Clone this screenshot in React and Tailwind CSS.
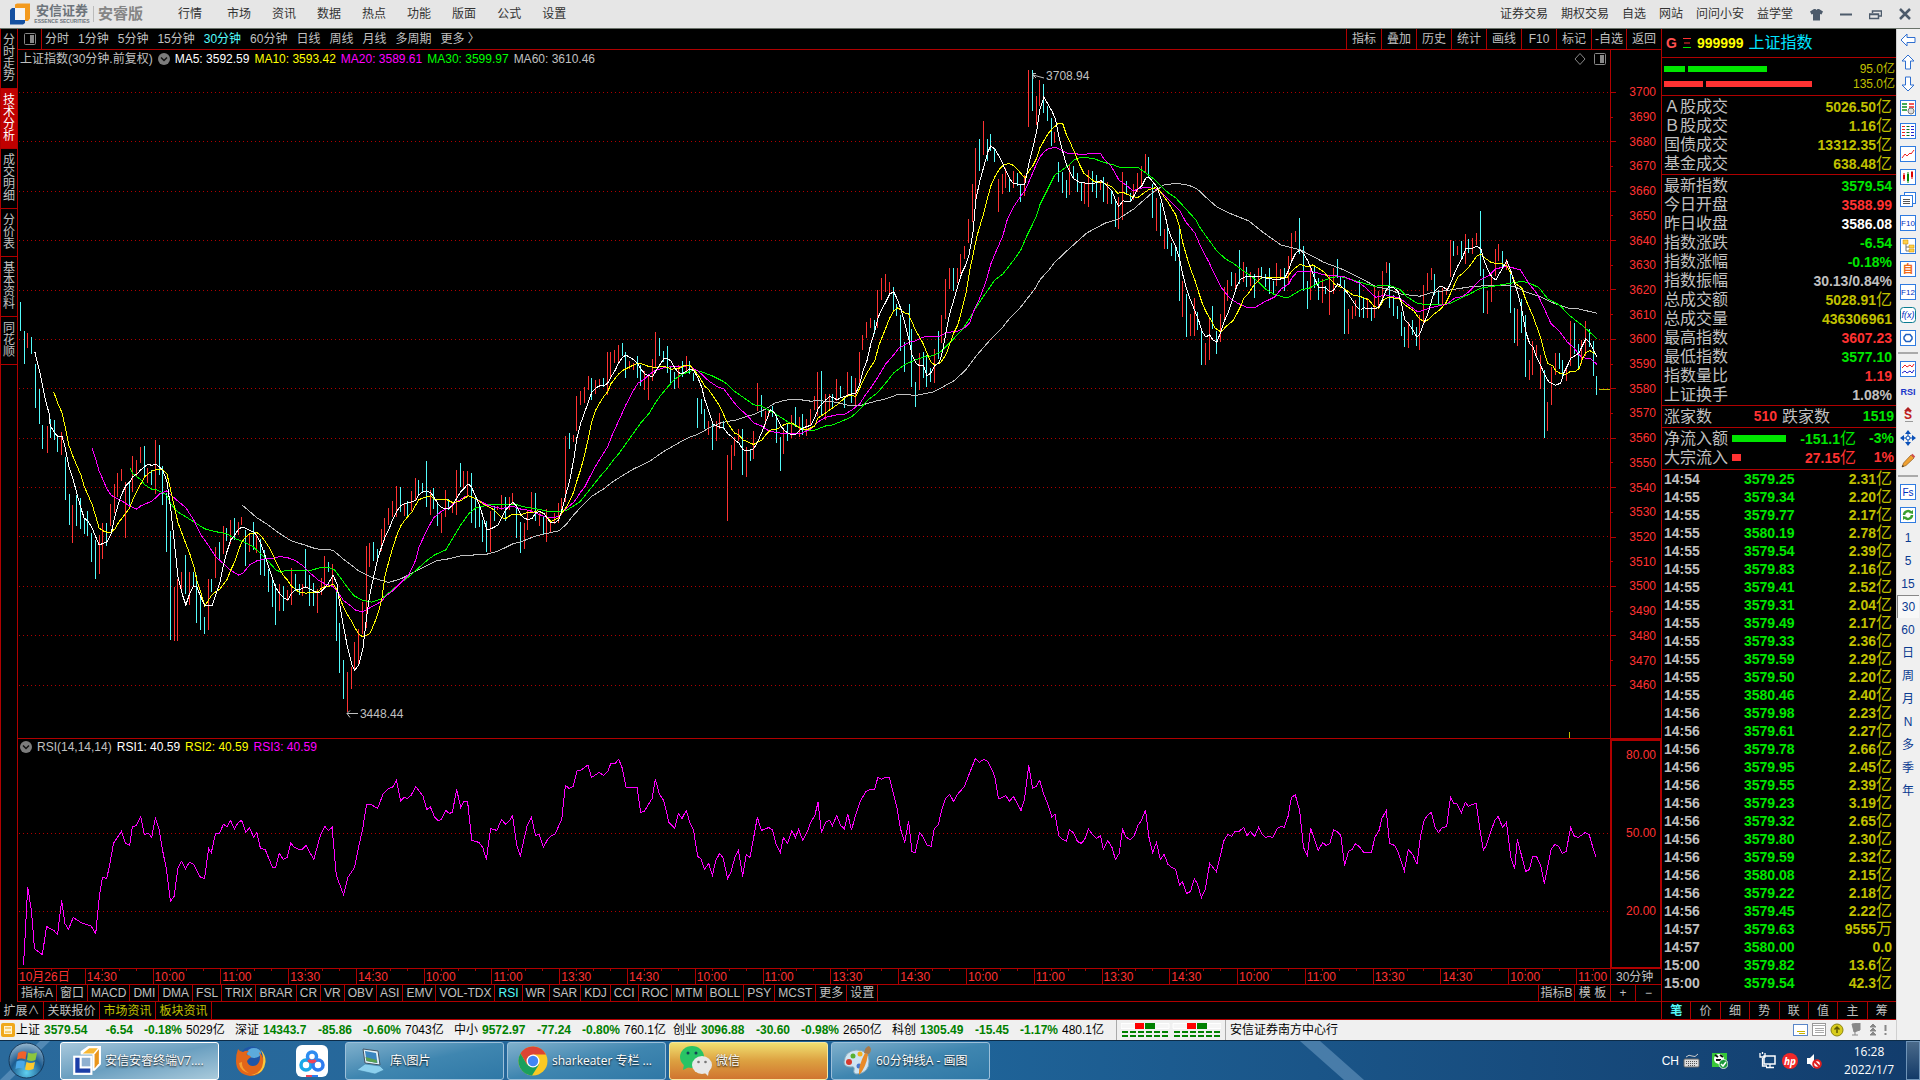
import { Fragment } from 'react'

const MENU = ['行情', '市场', '资讯', '数据', '热点', '功能', '版面', '公式', '设置']
const MENU_RIGHT = ['证券交易', '期权交易', '自选', '网站', '问问小安', '益学堂']
const SIDE_TABS = ['分时走势', '技术分析', '成交明细', '分价表', '基本资料', '同花顺']
const PERIODS = ['分时', '1分钟', '5分钟', '15分钟', '30分钟', '60分钟', '日线', '周线', '月线', '多周期', '更多 〉']
const TOOLS = ['指标', '叠加', '历史', '统计', '画线', 'F10', '标记', '-自选', '返回']
const INDICATORS = ['指标A', '窗口', 'MACD', 'DMI', 'DMA', 'FSL', 'TRIX', 'BRAR', 'CR', 'VR', 'OBV', 'ASI', 'EMV', 'VOL-TDX', 'RSI', 'WR', 'SAR', 'KDJ', 'CCI', 'ROC', 'MTM', 'BOLL', 'PSY', 'MCST', '更多', '设置']
const TIMES = ['14:30', '10:00', '11:00', '13:30']
const PRICES = Array.from({ length: 25 }, (_, i) => 3700 - i * 10)
const GRID_Y = [92, 141, 191, 240, 290, 339, 388, 438, 487, 536, 586, 635, 685]

const MA = [
  ['MA5: 3592.59', 'text-white'],
  ['MA10: 3593.42', 'text-[#ffff00]'],
  ['MA20: 3589.61', 'text-[#ff00ff]'],
  ['MA30: 3599.97', 'text-[#00ff00]'],
  ['MA60: 3610.46', 'text-[#c0c0c0]'],
]

const G = 'text-[#00e600]'
const R = 'text-[#ff3232]'
const Y = 'text-[#c0c000]'
const W = 'text-white'
const S = 'text-[#c0c0c0]'

const TURNOVER = [
  ['Ａ股成交', '5026.50', '亿', Y],
  ['Ｂ股成交', '1.16', '亿', Y],
  ['国债成交', '13312.35', '亿', Y],
  ['基金成交', '638.48', '亿', Y],
]

const QUOTE = [
  ['最新指数', '3579.54', '', G],
  ['今日开盘', '3588.99', '', R],
  ['昨日收盘', '3586.08', '', W],
  ['指数涨跌', '-6.54', '', G],
  ['指数涨幅', '-0.18%', '', G],
  ['指数振幅', '30.13/0.84%', '', S],
  ['总成交额', '5028.91', '亿', Y],
  ['总成交量', '436306961', '', Y],
  ['最高指数', '3607.23', '', R],
  ['最低指数', '3577.10', '', G],
  ['指数量比', '1.19', '', R],
  ['上证换手', '1.08%', '', S],
]

const TICKS = [
  ['14:54', '3579.25', '2.31', '亿'], ['14:55', '3579.34', '2.20', '亿'], ['14:55', '3579.77', '2.17', '亿'],
  ['14:55', '3580.19', '2.78', '亿'], ['14:55', '3579.54', '2.39', '亿'], ['14:55', '3579.83', '2.16', '亿'],
  ['14:55', '3579.41', '2.52', '亿'], ['14:55', '3579.31', '2.04', '亿'], ['14:55', '3579.49', '2.17', '亿'],
  ['14:55', '3579.33', '2.36', '亿'], ['14:55', '3579.59', '2.29', '亿'], ['14:55', '3579.50', '2.20', '亿'],
  ['14:55', '3580.46', '2.40', '亿'], ['14:56', '3579.98', '2.23', '亿'], ['14:56', '3579.61', '2.27', '亿'],
  ['14:56', '3579.78', '2.66', '亿'], ['14:56', '3579.95', '2.45', '亿'], ['14:56', '3579.55', '2.39', '亿'],
  ['14:56', '3579.23', '3.19', '亿'], ['14:56', '3579.32', '2.65', '亿'], ['14:56', '3579.80', '2.30', '亿'],
  ['14:56', '3579.59', '2.32', '亿'], ['14:56', '3580.08', '2.15', '亿'], ['14:56', '3579.22', '2.18', '亿'],
  ['14:56', '3579.45', '2.22', '亿'], ['14:57', '3579.63', '9555', '万'], ['14:57', '3580.00', '0.0', ''],
  ['15:00', '3579.82', '13.6', '亿'], ['15:00', '3579.54', '42.3', '亿'],
]

const INDEXES = [
  ['上证', '3579.54', '-6.54', '-0.18%', '5029亿'],
  ['深证', '14343.7', '-85.86', '-0.60%', '7043亿'],
  ['中小', '9572.97', '-77.24', '-0.80%', '760.1亿'],
  ['创业', '3096.88', '-30.60', '-0.98%', '2650亿'],
  ['科创', '1305.49', '-15.45', '-1.17%', '480.1亿'],
]

// Chart data, cut in four blocks. Bars are "x top bottom", lines are point lists.
const BLOCKS = [
  {
    transform: 'translate(0.5 360) scale(0.35714 0.33333)',
    down: '55 -174 -87,66 -87 12,88 -70 -18,97 12 143,108 87 192,119 195 266,139 177 234,150 180 240,161 228 276,183 290 419,192 402 495,214 405 498,225 414 507,234 474 522,245 453 528,256 519 606,267 540 657,298 489 558,362 366 447,404 258 348,424 330 375,446 255 345,455 318 435,466 399 576,477 513 840,519 585 702,541 636 675,550 645 789,561 711 810,572 771 822,592 657 696,614 548 597,634 504 543,656 474 540,687 510 618,709 486 570,729 537 645,740 570 648,751 627 696,763 657 741,771 672 795,793 678 753,825 642 693,836 672 705,855 567 681,866 645 738,877 669 738,919 606 636,942 687 843,950 789 939,961 900 1017,1045 548 603,1056 567 600,1121 381 456,1141 423 471,1171 360 405,1183 369 396,1194 303 441,1213 384 447,1225 429 498,1255 417 450,1289 309 381,1320 339 489,1331 411 504,1342 438 501,1351 480 546,1362 483 576,1384 438 483,1415 411 483,1446 432 534,1457 486 579,1499 399 483,1521 471 525',
    up: '77 -82 -35,131 198 279,172 216 285,203 435 549,276 525 642,287 491 597,309 432 498,318 372 459,329 339 411,340 327 363,351 366 534,371 288 396,382 300 350,393 261 309,413 323 369,435 240 402,488 681 843,497 657 843,508 636 693,530 636 735,583 657 810,603 561 654,625 498 582,645 480 552,667 486 525,676 471 495,698 519 576,718 522 579,782 672 753,805 690 723,814 624 735,847 672 708,889 687 759,898 654 705,908 588 684,931 612 678,972 936 1056,984 921 987,992 846 927,1003 807 915,1015 726 822,1026 558 804,1034 549 621,1068 507 573,1076 474 543,1087 444 495,1098 423 471,1110 378 471,1130 429 468,1152 393 453,1163 354 423,1205 390 465,1236 459 519,1247 390 471,1267 429 459,1278 330 465,1297 333 384,1309 333 411,1373 453 576,1393 438 450,1404 405 450,1426 411 450,1435 399 435,1468 489 567,1477 453 510,1488 396 459,1510 459 498,1530 447 546,1541 489 519,1552 459 492,1563 429 489',
    ma60: '676 435 718 474 745 492 780 520 814 543 850 555 883 567 931 571 960 598 1003 633 1045 655 1087 668 1121 657 1171 630 1220 603 1250 598 1289 588 1362 583 1393 574 1435 552 1457 546 1500 528 1563 513',
    ma30: '362 324 371 342 393 360 404 375 424 388 435 389 455 399 466 407 477 432 497 457 519 471 541 486 572 507 600 515 634 522 656 536 687 549 709 562 729 582 751 606 771 630 785 637 800 631 870 631 895 624 920 624 935 630 950 651 972 684 990 708 1015 722 1040 727 1065 718 1090 697 1121 669 1150 645 1171 624 1194 602 1216 585 1247 570 1267 534 1289 495 1311 462 1331 444 1351 439 1373 433 1440 433 1470 442 1500 447 1530 454 1563 454',
    ma20: '256 264 267 300 276 333 287 360 298 387 309 405 320 413 340 423 360 438 382 448 393 438 424 424 446 402 466 393 477 405 497 424 519 444 541 480 561 525 583 558 603 591 625 612 645 632 667 646 679 640 698 615 718 603 740 597 763 597 782 590 805 594 825 602 847 618 866 639 889 660 908 672 931 680 950 706 961 723 984 741 992 750 1013 757 1034 744 1065 726 1080 708 1098 693 1121 669 1143 645 1163 600 1171 564 1194 510 1213 474 1236 453 1256 443 1278 426 1300 411 1311 408 1331 417 1362 435 1384 442 1404 446 1435 439 1457 448 1477 451 1499 459 1521 470 1541 474 1563 470',
    ma10: '149 96 161 132 172 158 183 210 192 258 203 290 214 318 225 345 234 378 245 406 256 432 267 471 276 504 287 513 298 517 309 517 320 508 332 486 351 460 362 444 371 417 382 393 393 372 404 351 413 342 424 334 435 329 446 329 455 330 466 342 477 393 488 447 497 489 519 552 530 582 541 618 550 663 561 699 572 738 583 720 592 705 603 696 614 688 634 660 645 630 656 606 667 570 676 546 687 531 698 522 718 518 729 528 740 543 751 561 763 585 771 606 782 630 793 648 805 663 814 678 825 688 836 697 855 700 877 697 889 696 898 686 908 680 919 680 931 672 942 690 950 714 961 744 972 765 984 786 992 804 1003 822 1015 832 1034 822 1045 795 1056 765 1068 717 1076 651 1087 606 1098 564 1110 525 1121 498 1130 484 1152 456 1163 435 1171 420 1183 414 1205 408 1213 417 1225 420 1247 418 1267 429 1289 423 1300 414 1311 408 1331 417 1351 432 1373 444 1384 453 1404 474 1415 476 1426 468 1435 463 1457 466 1468 460 1488 458 1505 453 1521 462 1541 485 1552 480 1563 473',
    ma5: '96 -25 103 6 111 40 119 84 127 126 136 160 139 196 150 217 161 231 172 229 180 258 192 321 203 357 214 402 225 444 234 474 245 484 256 504 267 532 276 555 287 551 298 546 309 525 318 480 329 435 340 402 351 378 362 366 371 350 382 342 393 330 404 320 413 313 424 317 435 313 446 322 455 333 466 365 477 450 488 560 497 651 508 700 519 736 530 700 541 678 550 682 561 712 572 738 592 738 603 705 614 669 625 612 634 576 645 540 656 525 667 508 676 502 687 505 698 512 709 516 718 529 729 552 740 585 751 621 763 660 771 684 782 702 793 714 805 720 814 702 825 690 836 690 847 685 855 681 866 687 877 694 889 700 898 694 908 684 919 669 931 646 942 672 950 735 961 804 972 864 984 915 992 931 1003 915 1015 864 1026 765 1034 705 1045 650 1056 597 1068 558 1076 534 1087 510 1098 480 1110 453 1121 438 1130 432 1152 426 1163 422 1171 405 1183 396 1194 393 1205 399 1213 411 1225 432 1236 444 1247 447 1255 447 1267 435 1278 414 1289 396 1300 384 1309 372 1318 380 1331 411 1342 438 1351 471 1362 510 1373 507 1384 501 1393 496 1404 471 1415 450 1426 435 1435 428 1446 440 1457 465 1468 477 1477 478 1488 477 1499 459 1510 455 1521 460 1530 474 1541 489 1552 489 1563 480',
  },
  {
    transform: 'translate(500.5 300) scale(0.35714 0.33333)',
    down: '194 399 447,256 234 300,289 234 261,343 129 168,351 156 234,385 168 234,393 195 258,446 114 168,457 153 186,468 138 219,477 198 249,488 216 267,510 183 231,530 183 222,541 219 243,553 294 384,564 297 342,572 327 387,595 366 450,625 363 387,679 387 525,701 447 483,732 285 351,763 318 351,774 345 429,785 411 513,805 372 423,827 321 381,847 342 405,900 213 348,931 282 321,953 258 294,964 291 324,984 228 309,1048 60 102,1101 -40 33,1110 12 48,1121 45 153,1132 126 216,1144 12 120,1152 87 261,1163 246 321,1185 156 234,1194 165 261,1205 204 246,1227 93 177',
    up: '172 594 645,183 408 606,205 405 426,214 288 393,225 273 315,236 261 309,247 228 270,267 240 282,278 237 258,300 156 285,309 155 234,320 150 189,331 135 186,362 183 207,373 189 210,404 213 270,415 222 300,427 177 243,435 96 204,499 195 264,522 168 216,583 363 405,606 363 423,614 339 387,637 465 663,648 435 510,656 411 468,667 387 423,690 441 531,709 393 477,720 249 333,743 333 375,751 330 351,793 387 462,816 345 414,836 351 411,858 357 408,869 327 375,880 288 330,889 216 348,911 282 360,922 282 333,942 237 303,973 216 288,995 234 315,1006 156 249,1015 105 150,1026 66 114,1037 54 84,1057 -30 84,1068 -66 0,1079 -78 -24,1090 -54 -12,1174 159 270,1216 147 249',
    ma60: '163 693 183 675 205 645 236 610 256 589 289 567 314 546 345 525 373 507 415 486 457 455 499 429 530 412 553 403 583 385 614 370 637 364 656 362 690 349 709 344 743 327 768 310 796 301 830 298 869 304 890 302 940 307 975 317 1010 316 1050 304 1079 297 1112 284 1165 286 1210 277 1232 265',
    ma30: '163 634 183 633 205 618 222 606 236 588 256 561 278 531 300 504 314 483 331 462 351 432 373 399 393 369 415 342 432 312 446 290 466 264 486 240 508 223 541 211 564 216 595 229 628 247 656 275 690 300 709 315 730 318 755 333 774 345 805 366 827 378 855 391 880 391 911 378 931 375 964 360 984 350 1006 329 1026 303 1057 277 1079 249 1101 219 1116 207 1135 192 1160 181 1190 170 1210 168 1232 156',
    ma20: '163 650 183 627 205 607 214 594 225 576 236 561 256 519 267 498 289 459 300 441 314 402 331 363 351 315 373 270 385 250 404 237 415 225 435 211 457 204 480 200 530 198 541 207 553 213 583 243 606 260 625 267 648 300 667 324 690 346 709 369 732 379 751 393 774 398 796 402 840 401 869 388 889 366 911 352 942 345 964 343 984 330 1006 312 1020 288 1037 264 1057 231 1079 192 1101 165 1116 144 1132 135 1146 126 1160 124 1180 113 1194 109 1232 109',
    ma10: '163 653 172 639 183 624 194 603 205 576 214 543 225 507 236 462 247 411 256 363 267 330 278 309 289 290 300 276 309 252 320 237 331 222 343 211 362 201 385 189 404 195 415 200 435 203 457 199 480 208 500 205 515 197 530 196 541 210 553 225 572 259 583 270 595 288 606 306 614 319 625 345 637 372 656 400 667 405 679 420 709 434 732 420 743 405 755 391 774 388 796 373 816 369 836 384 858 390 880 378 889 354 900 347 922 330 942 315 964 294 975 287 995 289 1006 264 1026 219 1048 183 1060 135 1079 84 1090 54 1101 33 1112 24 1121 30 1132 39 1142 42 1152 66 1163 93 1174 112 1185 135 1194 159 1205 186 1216 196 1232 188',
    ma5: '163 660 172 630 183 585 194 540 205 480 214 414 225 369 236 336 247 303 256 276 267 264 278 258 292 256 300 250 309 232 320 213 331 189 343 171 351 166 362 172 373 180 385 192 393 207 404 222 415 228 427 229 435 213 446 195 457 177 466 175 477 183 488 204 499 219 510 221 522 213 530 207 541 212 553 234 564 264 572 300 583 333 595 372 614 382 625 384 637 402 648 411 656 420 667 429 679 450 690 452 701 450 709 447 720 426 732 396 743 366 755 330 765 336 774 354 785 378 796 393 808 402 825 405 836 393 847 384 869 376 880 354 889 327 900 312 911 300 922 290 931 293 942 300 953 293 964 290 975 284 995 280 1006 252 1015 213 1026 183 1037 132 1048 93 1057 54 1068 27 1079 6 1090 -18 1101 -24 1112 0 1121 27 1132 69 1144 120 1152 165 1163 189 1174 198 1185 198 1194 228 1205 219 1216 198 1227 189 1232 177',
  },
  {
    transform: 'translate(940.5 50) scale(0.33333)',
    down: '40 654 723,118 267 363,142 267 333,151 252 303,163 294 336,208 381 426,232 369 408,241 402 456,277 60 183,310 102 189,322 168 213,334 204 288,355 336 396,367 366 429,379 390 444,400 348 381,412 369 426,424 399 453,457 363 426,469 375 444,490 381 456,514 420 462,526 447 531,559 393 432,571 429 456,625 321 384,637 402 504,661 459 558,682 534 597,694 579 618,706 591 633,718 531 753,739 732 861,772 786 840,784 834 945,817 768 837,829 843 912,874 666 708,898 600 702,919 651 711,943 672 744,964 651 687,976 672 711,988 654 732,1000 693 729,1033 654 723,1078 504 612,1090 588 723,1102 693 777,1123 645 714,1135 684 750,1156 708 732,1192 627 684,1201 681 708,1213 690 852,1258 690 801',
    up: '4 795 879,16 687 807,28 654 717,52 654 700,61 612 672,73 588 627,85 507 579,97 402 516,106 294 447,130 213 315,175 387 486,187 372 432,196 354 414,220 363 414,253 375 438,265 60 231,289 138 225,298 90 168,343 246 279,388 342 435,433 399 462,445 360 471,481 393 420,502 396 462,535 441 537,547 366 510,580 402 450,592 369 426,604 348 411,616 312 369,649 444 543,673 537 597,727 693 801,751 792 858,763 744 858,796 879 945,808 801 930,841 792 876,853 711 816,862 690 753,886 669 720,910 636 696,931 666 708,955 654 696,1009 639 708,1021 657 690,1045 618 699,1054 549 630,1066 543 576,1111 651 750,1147 687 759,1168 678 795,1180 654 732,1225 777 852,1237 768 807,1246 750 798',
    ma60: '0 1015 40 993 76 960 106 919 151 868 190 828 199 815 241 771 283 717 298 690 325 660 343 637 382 600 439 549 495 519 532 508 580 477 631 432 670 405 710 400 745 406 770 417 805 450 829 471 865 489 925 513 970 549 1021 585 1080 600 1150 637 1210 660 1260 685',
    ma30: '0 906 28 879 64 840 85 810 106 774 130 738 163 690 187 672 199 657 220 630 241 600 259 558 274 528 289 495 298 465 310 441 325 411 343 375 361 363 385 345 400 330 422 322 457 325 490 337 520 345 537 352 592 352 613 367 640 387 665 412 685 430 706 444 739 480 766 510 781 537 805 570 829 603 855 627 877 639 905 660 931 678 950 693 975 717 1000 733 1030 742 1045 742 1080 721 1108 714 1140 696 1170 684 1195 679 1220 685 1260 697',
    ma20: '0 858 22 847 50 845 72 834 88 819 100 783 118 744 136 696 151 642 166 606 187 558 199 513 217 474 241 438 253 423 265 396 283 354 298 321 313 303 325 296 346 292 361 300 379 309 430 314 445 311 480 310 490 327 511 348 522 366 535 390 556 405 578 423 595 416 620 411 655 420 680 444 700 464 718 483 736 516 763 549 781 591 805 636 820 669 841 711 870 747 890 759 918 772 945 772 970 757 1003 741 1022 717 1045 702 1054 684 1070 666 1087 664 1125 667 1150 675 1210 680 1240 693 1260 701',
    ma10: '0 938 16 915 28 882 40 849 52 825 64 780 76 732 88 660 97 618 109 560 120 522 130 489 142 441 151 408 163 381 175 360 187 347 205 340 220 347 232 360 253 384 265 363 277 348 289 324 298 294 310 273 322 252 337 235 355 219 367 222 379 258 391 282 403 309 415 339 430 370 445 381 460 394 490 399 514 411 532 430 547 427 571 438 592 443 610 429 625 419 646 413 658 423 682 456 706 495 718 534 727 579 739 621 751 660 763 690 775 729 787 765 799 790 811 810 823 834 841 846 853 834 865 822 877 813 889 792 901 768 910 745 925 729 943 702 961 684 1039 684 1054 663 1078 643 1100 651 1117 645 1132 654 1150 666 1168 687 1185 705 1213 717 1237 735 1260 740',
    ma5: '0 927 7 900 16 850 28 790 40 750 52 708 64 669 76 645 85 618 97 552 106 450 118 393 130 350 142 306 151 288 163 297 175 318 187 342 196 363 208 387 217 399 241 405 253 402 265 342 277 294 289 240 298 180 310 141 322 162 334 183 345 207 355 258 367 306 379 348 391 372 400 387 418 397 457 402 481 392 490 399 502 411 514 423 526 453 535 469 547 453 571 454 580 438 592 417 604 408 616 384 625 381 637 396 649 411 661 444 673 492 682 534 694 567 706 591 718 630 727 675 739 720 751 753 763 783 775 813 784 843 796 861 808 855 817 870 829 877 841 846 853 810 865 783 877 747 889 708 901 687 913 681 943 681 955 679 976 684 1009 690 1033 684 1045 660 1054 633 1066 609 1078 600 1090 612 1102 633 1111 654 1123 687 1135 714 1156 714 1168 726 1180 720 1192 702 1201 708 1213 720 1225 735 1237 753 1249 771 1260 781',
  },
  {
    transform: 'translate(1300.5 180) scale(0.33333)',
    down: '190 351 414,214 381 423,268 249 384,280 345 408,292 378 417,304 396 468,313 441 501,337 420 465,349 441 498,403 282 345,415 330 372,460 183 228,484 183 240,505 177 219,541 93 288,550 267 399,607 213 264,631 267 399,643 384 489,664 357 459,676 405 591,733 570 774,778 519 567,787 540 594,823 429 522,835 492 564,868 447 501,880 483 588,889 588 645',
    up: '202 354 414,223 318 414,235 333 381,247 273 354,259 246 279,325 426 504,358 405 510,370 315 435,382 279 333,394 264 300,427 324 375,439 324 346,451 180 291,472 198 225,496 162 252,517 174 222,529 159 195,562 333 402,574 276 366,586 207 288,595 192 243,619 237 270,652 387 498,688 540 600,697 483 585,709 495 528,721 525 627,742 666 753,754 561 675,766 519 585,799 567 603,811 423 558,844 480 552,856 423 528',
    ma60: '180 295 229 321 259 327 304 343 358 349 390 339 430 333 520 319 610 316 640 319 676 336 720 351 750 366 800 384 835 387 889 400',
    ma30: '180 307 220 319 265 316 298 328 320 351 350 370 375 374 445 372 470 360 508 342 540 325 590 317 625 311 665 304 690 311 715 323 742 357 778 376 805 405 847 438 889 476',
    ma20: '180 311 200 327 214 342 226 352 256 345 298 355 320 372 352 396 397 382 440 372 466 352 484 351 508 333 538 300 565 287 585 267 620 259 660 270 682 306 712 345 733 390 751 430 778 456 800 486 820 504 844 534 868 535 889 553',
    ma10: '180 350 205 360 220 379 235 385 250 360 265 351 298 358 313 375 340 393 355 414 370 426 382 420 397 405 418 390 436 369 448 345 460 318 472 291 484 282 508 258 529 228 541 222 553 234 574 249 604 250 619 258 634 285 646 312 664 324 676 360 697 408 709 441 721 474 733 525 742 550 757 558 766 573 781 582 796 583 811 574 826 574 836 566 847 534 856 519 868 512 880 519 889 527',
    ma5: '180 391 190 384 223 387 235 381 247 357 256 333 265 320 280 324 292 333 304 375 313 420 325 432 337 450 349 471 358 462 370 430 382 402 394 360 403 333 418 318 430 322 440 331 451 309 460 285 472 258 484 237 496 207 517 205 529 198 541 207 550 240 562 270 574 291 586 300 598 279 610 258 619 243 631 273 643 315 652 339 664 390 676 456 688 492 697 501 709 534 721 558 733 585 745 606 757 612 766 616 781 609 790 579 802 555 811 535 835 520 844 501 856 477 868 489 880 513 889 530',
  },
]

const RSI = [
  ['translate(0 730) scale(0.52301 0.33333)', '45 705 53 471 60 540 66 656 81 673 89 589 103 601 110 613 118 511 124 580 131 597 140 562 156 578 174 587 183 610 190 498 196 442 204 445 210 402 217 340 232 304 240 340 248 346 253 291 261 286 269 260 276 313 284 310 290 322 297 265 304 297 312 370 318 415 326 514 333 498 340 415 347 394 355 416 362 396 370 402 383 441 391 445 399 355 404 368 412 310 420 309 427 283 434 289 441 271 448 297 456 276 462 271 470 307 477 292 485 322 491 307 498 355 507 358 521 412 527 412 534 370 542 388 549 382 556 339 562 350 572 358 578 358 585 346 600 388 613 313 621 289 628 301 635 292 643 436 657 494 665 442 678 412 685 355 693 300 701 223 709 223 722 235 733 190 743 175 751 171 758 151 766 214 772 202 779 205 786 196 795 169 809 199 816 238 823 231 831 261 838 272 844 268 852 241 859 250 865 247 873 178 881 232 887 214 894 214 902 331 916 337 923 352 930 388 938 295 950 301 959 268 967 283 974 272 980 256 988 346 995 376 1008 286 1016 262 1024 316 1031 313 1039 352 1046 331 1054 316 1061 313 1074 268 1081 166 1088 175 1096 169 1103 123 1111 120 1124 105 1131 142 1146 127 1154 136 1162 124 1168 100 1176 100 1183 88 1190 115 1197 171 1218 172 1225 247 1232 243 1247 205 1253 148 1261 193 1269 211 1279 277 1290 295 1297 250 1304 265 1312 241 1319 277 1326 300 1334 379 1340 385 1347 418 1355 400 1362 436 1369 390 1376 370 1383 385 1391 445 1398 424 1405 382 1412 361 1420 439 1427 373 1434 382 1441 322 1448 262 1456 301 1470 292 1477 300 1484 343 1492 367 1498 322 1506 340 1514 301 1521 322 1527 298 1535 331'],
  ['translate(800 730) scale(0.54846 0.33333)', '5 331 13 306 20 275 27 256 33 216 39 308 47 276 54 270 59 287 67 256 74 286 81 296 87 252 94 300 101 256 110 214 120 184 128 178 136 178 142 142 149 148 155 142 163 142 170 190 177 235 183 295 191 337 198 273 204 364 210 368 218 307 225 322 232 345 239 349 245 295 252 285 259 235 266 204 273 193 280 214 287 193 300 169 307 138 320 85 327 97 335 88 342 94 349 115 355 139 362 206 369 202 375 196 382 214 389 199 403 241 409 210 417 106 424 175 431 168 437 151 444 190 452 223 459 260 465 253 472 318 479 328 486 334 491 298 498 307 506 334 513 340 519 328 526 297 533 312 541 325 548 316 553 358 561 331 569 352 575 388 582 370 588 298 595 322 602 328 609 319 616 286 622 273 630 240 636 320 643 367 650 337 657 388 664 373 671 403 678 412 685 418 692 466 697 454 705 490 712 484 719 445 725 463 732 502 739 478 747 400 759 424 766 379 773 331 780 313 787 319 793 304 801 303 809 292 815 317 821 304 829 319 836 292 843 313 849 322 856 319 862 322 870 295 877 289 883 292 890 258 896 202 903 194 911 241 918 352 925 376 931 295 938 328 945 361 953 337 959 346 966 340 973 300 979 304 986 316 993 406 1000 364 1007 358 1013 340 1021 352 1028 368 1042 367 1048 322 1056 300 1061 265 1069 241 1075 340 1084 346 1090 365 1102 422 1109 358 1117 373 1125 402 1131 322 1138 271 1144 256 1151 247 1158 292 1164 307 1171 293 1179 289 1186 202 1192 220 1198 222 1206 247 1213 217 1219 229 1226 223 1233 220 1240 300 1246 361 1252 343 1259 307 1267 271 1273 259 1281 292 1288 277 1296 382 1303 415 1308 328 1323 424 1330 418 1336 379 1343 379 1351 409 1357 460 1370 355 1377 343 1384 350 1390 370 1397 364 1405 292 1412 319 1419 322 1432 307 1439 314 1447 360 1451 380'],
]

const barsPath = bars =>
  bars.split(',').map(b => {
    const [x, top, bottom] = b.split(' ')
    return `M${x} ${top}V${bottom}`
  }).join('')

function Line({ points, color }) {
  return <polyline points={points} fill="none" stroke={color} vectorEffect="non-scaling-stroke" />
}

function PriceChart() {
  return (
    <svg className="absolute inset-0 h-full w-full" viewBox="18 50 1592 688" preserveAspectRatio="none" shapeRendering="crispEdges" aria-hidden="true">
      {GRID_Y.map(y => (
        <path key={y} d={`M19 ${y + 0.5}H1610`} stroke="#b00000" strokeDasharray="1 3" vectorEffect="non-scaling-stroke" />
      ))}
      {BLOCKS.map(b => (
        <g key={b.transform} transform={b.transform}>
          <path d={barsPath(b.up)} stroke="#ff3232" vectorEffect="non-scaling-stroke" />
          <path d={barsPath(b.down)} stroke="#54fcfc" vectorEffect="non-scaling-stroke" />
          <Line points={b.ma60} color="#c0c0c0" />
          <Line points={b.ma30} color="#00ff00" />
          <Line points={b.ma20} color="#ff00ff" />
          <Line points={b.ma10} color="#ffff00" />
          <Line points={b.ma5} color="#ffffff" />
        </g>
      ))}
      <path d="M1599 389.5H1610M1569.5 732V738" stroke="#c0c000" vectorEffect="non-scaling-stroke" />
    </svg>
  )
}

function RsiChart() {
  return (
    <svg className="absolute inset-0 h-full w-full" viewBox="18 739 1592 229" preserveAspectRatio="none" shapeRendering="crispEdges" aria-hidden="true">
      <path d="M19 833.5H1610M19 911.5H1610" stroke="#b00000" strokeDasharray="1 3" vectorEffect="non-scaling-stroke" />
      {RSI.map(([transform, points]) => (
        <g key={transform} transform={transform}>
          <Line points={points} color="#ff00ff" />
        </g>
      ))}
    </svg>
  )
}

function CircleDown() {
  return (
    <svg className="size-3 shrink-0" viewBox="0 0 12 12" aria-hidden="true">
      <circle cx="6" cy="6" r="6" fill="#7c7c7c" />
      <path d="M3 4.5 6 7.5 9 4.5" fill="none" stroke="#111" strokeWidth="1.5" />
    </svg>
  )
}

function PaneIcon() {
  return (
    <svg className="size-3" viewBox="0 0 12 12" aria-hidden="true">
      <rect x=".5" y=".5" width="11" height="11" rx="1" fill="none" stroke="#888" />
      <rect x="6" y="2" width="4" height="8" fill="#888" />
    </svg>
  )
}

function Header() {
  return (
    <header className="flex h-[29px] shrink-0 items-center border-b border-[#6a736a] bg-[#e6e6e6] text-[#333]">
      <svg className="ml-[9px] size-[22px]" viewBox="0 0 22 22" aria-hidden="true">
        <path d="M6 5V1.5L8 .5h13v15l-2 2.500h-3V5z" fill="#f39a1e" />
        <path d="M1 7 3 5h3v12h10v3l-2 1.500H1z" fill="#1450a0" />
        <path d="M6 5h10v12H6z" fill="#f4f4f4" />
      </svg>
      <div className="ml-1 flex w-[54px] flex-col items-center">
        <span className="text-[13px] leading-[14px] font-bold text-[#6d747b]">安信证券</span>
        <span className="text-[5px] leading-[6px] font-bold whitespace-nowrap text-[#6d747b]">ESSENCE SECURITIES</span>
      </div>
      <span className="mx-1 h-4 w-px bg-[#bbb]" />
      <span className="text-[15px] font-bold text-[#858585]">安睿版</span>
      <nav className="ml-[35px] flex gap-[21px]">
        {MENU.map((m, i) => <button key={m} type="button" className={i ? '' : 'mr-1'}>{m}</button>)}
      </nav>
      <nav className="ml-auto flex gap-[13px]">
        {MENU_RIGHT.map(m => <button key={m} type="button">{m}</button>)}
      </nav>
      <div className="ml-[17px] flex items-center gap-[17px] pr-[9px] text-[#4d5b6b]">
        <button type="button" aria-label="换肤">
          <svg className="size-[13px]" viewBox="0 0 13 13"><path d="M4 1h1.500l1 1 1-1H9l4 2.500-1.500 3L10 6v6.500H3V6l-1.500.5L0 3.500z" fill="currentColor" /></svg>
        </button>
        <button type="button" aria-label="最小化">
          <svg className="h-[13px] w-3" viewBox="0 0 12 13"><path d="M0 6.500h12" stroke="currentColor" strokeWidth="2" /></svg>
        </button>
        <button type="button" aria-label="还原">
          <svg className="size-[13px]" viewBox="0 0 13 13"><path d="M3.500 5V3h9v5h-2.500M.5 6h9v4.500h-9zM.5 6.500h9" fill="none" stroke="currentColor" strokeWidth="1.500" /></svg>
        </button>
        <button type="button" aria-label="关闭">
          <svg className="size-3" viewBox="0 0 12 12"><path d="m1 1 10 10M11 1 1 11" stroke="currentColor" strokeWidth="2.500" /></svg>
        </button>
      </div>
    </header>
  )
}

function SideTabs() {
  return (
    <nav className="flex w-[18px] shrink-0 flex-col border-x border-[#b00000]">
      {SIDE_TABS.map((t, i) => (
        <button
          key={t}
          type="button"
          className={`border-b border-[#b00000] px-[2px] pt-[5px] pb-[6px] leading-3 break-all ${i === 1 ? 'bg-[#c00000] text-white' : 'text-[#c0c0c0]'}`}
        >
          {t}
        </button>
      ))}
    </nav>
  )
}

function ChartToolbar() {
  return (
    <div className="flex h-[21px] shrink-0 items-stretch border-b border-[#b00000]">
      <button type="button" aria-label="窗格" className="flex w-6 items-center justify-center border-r border-[#b00000]"><PaneIcon /></button>
      <div className="flex items-center gap-[9px] pl-[3px]">
        {PERIODS.map(p => (
          <button key={p} type="button" className={p === '30分钟' ? 'whitespace-nowrap text-[#54fcfc]' : 'whitespace-nowrap'}>{p}</button>
        ))}
      </div>
      <div className="ml-auto flex">
        {TOOLS.map(t => (
          <button key={t} type="button" className="w-[35px] border-l border-[#b00000] whitespace-nowrap">{t}</button>
        ))}
      </div>
    </div>
  )
}

function PricePane() {
  return (
    <div className="flex min-h-0 flex-[3] border-b border-[#b00000]">
      <div className="relative flex-1">
        <PriceChart />
        <div className="relative flex h-[18px] items-center gap-[5px] pr-1 pl-[2px] whitespace-nowrap">
          <span>上证指数(30分钟.前复权)</span>
          <CircleDown />
          {MA.map(([text, color]) => <span key={text} className={color}>{text}</span>)}
          <span className="ml-auto flex items-center gap-2">
            <svg className="size-3" viewBox="0 0 12 12" aria-hidden="true"><path d="M6 .5 11 6l-5 5.500L1 6z" fill="none" stroke="#888" /></svg>
            <PaneIcon />
          </span>
        </div>
        <span className="absolute top-[18px] left-[63.7%] flex items-center gap-[2px]">
          <svg className="h-2 w-3" viewBox="0 0 12 8" aria-hidden="true"><path d="M12 6 1 3M1 7V1.500h3M1 3l3 3" fill="none" stroke="#c0c0c0" /></svg>
          3708.94
        </span>
        <span className="absolute bottom-4 left-[20.6%] flex items-center gap-[2px]">
          <svg className="h-2 w-3" viewBox="0 0 12 8" aria-hidden="true"><path d="M12 3.500H1M4 .5 1 3.500l3 4" fill="none" stroke="#c0c0c0" /></svg>
          3448.44
        </span>
      </div>
      <ul className="flex w-[51px] flex-col border-l border-[#b00000] pt-[30px] pb-10 text-[#ff3232]">
        {PRICES.map((p, i) => (
          <li key={p} className="flex flex-1 items-center justify-between pr-[5px]">
            <span className={i % 2 ? 'h-px w-[2px] bg-[#b00000]' : 'h-px w-[5px] bg-[#b00000]'} />
            {p}
          </li>
        ))}
      </ul>
    </div>
  )
}

function RsiPane() {
  return (
    <div className="flex min-h-0 flex-1 border-b border-[#b00000]">
      <div className="relative flex-1">
        <RsiChart />
        <div className="relative flex h-4 items-center gap-[5px] pl-[2px] whitespace-nowrap">
          <CircleDown />
          <span>RSI(14,14,14)</span>
          <span className="text-white">RSI1: 40.59</span>
          <span className="text-[#ffff00]">RSI2: 40.59</span>
          <span className="text-[#ff00ff]">RSI3: 40.59</span>
        </div>
      </div>
      <div className="flex w-[51px] flex-col items-end gap-[62px] border-2 border-r border-b border-[#b00000] pt-[6px] pr-1 text-[#ff3232]">
        <span>80.00</span>
        <span>50.00</span>
        <span>20.00</span>
      </div>
    </div>
  )
}

function TimeAxis() {
  return (
    <div className="flex h-4 shrink-0 border-b border-[#b00000]">
      <div className="flex flex-1 text-[#ff3232]">
        {Array.from({ length: 24 }, (_, i) => (
          <div key={i} className={`relative min-w-0 overflow-hidden pl-px whitespace-nowrap ${i === 23 ? 'flex-[33]' : 'flex-[68]'} ${i ? 'border-l border-[#b00000]' : ''}`}>
            <div className="absolute inset-x-0 top-0 flex h-[2px] justify-evenly">
              {(i === 23 ? [1] : [1, 2, 3]).map(n => <i key={n} className="w-px bg-[#b00000]" />)}
            </div>
            <span className="leading-4">{i ? TIMES[(i - 1) % 4] : '10月26日'}</span>
          </div>
        ))}
      </div>
      <div className="w-[51px] border-l border-[#b00000] pl-[5px] leading-4">30分钟</div>
    </div>
  )
}

function IndicatorTabs() {
  return (
    <div className="flex h-[17px] shrink-0 border-b border-[#b00000]">
      {INDICATORS.map(t => (
        <button key={t} type="button" className={`border-r border-[#b00000] px-[3px] whitespace-nowrap ${t === 'RSI' ? 'text-[#54fcfc]' : ''}`}>{t}</button>
      ))}
      <button type="button" className="ml-auto w-9 border-l border-[#b00000] whitespace-nowrap">指标B</button>
      <button type="button" className="w-9 border-l border-[#b00000] whitespace-nowrap">模 板</button>
      <button type="button" className="w-[25px] border-l border-[#b00000]">+</button>
      <button type="button" className="w-[26px] border-l border-[#b00000]">−</button>
    </div>
  )
}

function QuoteRows({ rows }) {
  return (
    <dl className="border-b border-[#b00000] py-px">
      {rows.map(([label, value, unit, color]) => (
        <div key={label} className="flex h-[19px] items-center justify-between pr-1 pl-[2px]">
          <dt className="text-base leading-[19px]">{label}</dt>
          <dd className={`text-[14px] leading-[19px] font-bold ${color}`}>{value}<span className="text-base leading-[19px] font-normal">{unit}</span></dd>
        </div>
      ))}
    </dl>
  )
}

function QuotePanel() {
  return (
    <aside className="flex w-[235px] shrink-0 flex-col border-l border-[#b00000]">
      <h1 className="flex h-[29px] items-center border-b border-[#b00000] pl-1">
        <span className="text-[14px] font-bold text-[#ff5050]">G</span>
        <svg className="mx-[6px] h-3 w-2" viewBox="0 0 8 12" aria-hidden="true"><path d="M0 1.500h8M1 6h6" stroke="#ff3232" /><path d="M0 10.500h8" stroke="#00e600" /></svg>
        <span className="text-[14px] font-bold text-[#ffff00]">999999</span>
        <span className="ml-[5px] text-base text-[#00e4ff]">上证指数</span>
      </h1>
      <div className="flex h-[38px] flex-col justify-center border-b border-[#b00000] text-[#c0c000]">
        <div className="flex h-[15px] items-center pr-px pl-[2px]">
          <i className="h-[6px] w-[21px] bg-[#00e600]" /><i className="ml-[3px] h-[6px] w-[79px] bg-[#00e600]" />
          <span className="ml-auto">95.0亿</span>
        </div>
        <div className="flex h-[15px] items-center pr-px pl-[2px]">
          <i className="h-[6px] w-[39px] bg-[#ff3232]" /><i className="ml-[3px] h-[6px] w-[106px] bg-[#ff3232]" />
          <span className="ml-auto">135.0亿</span>
        </div>
      </div>
      <QuoteRows rows={TURNOVER} />
      <QuoteRows rows={QUOTE} />
      <div className="flex h-[22px] items-center border-b border-[#b00000] pr-[2px] pl-[2px] text-base">
        <span>涨家数</span>
        <b className="w-[65px] text-right text-[14px] text-[#ff3232]">510</b>
        <span className="ml-[5px]">跌家数</span>
        <b className="ml-auto text-[14px] text-[#00e600]">1519</b>
      </div>
      <div className="border-b border-[#b00000] pt-px pb-[2px]">
        {[
          ['净流入额', '-151.1', '-3%', 'w-[54px] bg-[#00e600]', G],
          ['大宗流入', '27.15', '1%', 'w-[9px] bg-[#ff3232]', R],
        ].map(([label, value, pct, bar, color]) => (
          <div key={label} className="flex h-[19px] items-center pr-[2px] pl-[2px] text-base leading-[19px]">
            <span>{label}</span>
            <span className="ml-1 w-[54px]"><i className={`block h-[7px] ${bar}`} /></span>
            <span className={`w-[70px] text-right ${color}`}><b className="text-[14px]">{value}</b>亿</span>
            <b className={`ml-auto text-[14px] ${color}`}>{pct}</b>
          </div>
        ))}
      </div>
      <div className="min-h-0 flex-1 overflow-hidden">
        <table className="w-full text-[14px] leading-[18px] font-bold">
          <tbody>
            {TICKS.map(([time, price, amount, unit], i) => (
              <tr key={i} className="h-[18px]">
                <td className="w-[80px] p-0 pl-[2px]">{time}</td>
                <td className="p-0 pl-[2px] text-[#00e600]">{price}</td>
                <td className="p-0 pr-1 text-right text-[#c0c000]">{amount}<span className="text-base leading-[18px] font-normal">{unit}</span></td>
              </tr>
            ))}
          </tbody>
        </table>
      </div>
      <div className="flex h-[19px] shrink-0 border-y border-[#b00000]">
        {[...'笔价细势联值主筹'].map((t, i) => (
          <button key={t} type="button" className={i ? 'flex-1 border-l border-[#b00000]' : 'flex-1 font-bold text-[#54fcfc]'}>{t}</button>
        ))}
      </div>
    </aside>
  )
}

function StatusBar() {
  return (
    <footer className="flex h-5 shrink-0 items-center bg-[#f0f0f0] whitespace-nowrap text-black">
      <svg className="ml-px size-[14px]" viewBox="0 0 14 14" aria-hidden="true">
        <rect width="14" height="14" rx="2" fill="#f0a81c" /><rect x="3" y="3" width="8" height="8" fill="#fff3cf" /><path d="M4 5h6M4 9h6" stroke="#f0a81c" />
      </svg>
      <div className="flex pl-px">
        {INDEXES.map(([name, value, change, pct, amount]) => (
          <div key={name} className="grid w-[219px] grid-cols-[28px_45px_44px_49px_1fr] items-center">
            <span>{name}</span>
            <b className="text-[#008000]">{value}</b>
            <b className="text-right text-[#008000]">{change}</b>
            <b className="text-right text-[#008000]">{pct}</b>
            <span className="pl-1">{amount}</span>
          </div>
        ))}
      </div>
      <div className="ml-[5px] flex h-full items-center border-x border-[#aaa] px-1">
        <svg className="h-[14px] w-[100px]" viewBox="0 0 100 14" aria-hidden="true">
          {[0, 52].map(x => (
            <g key={x}>
              <path d={`M${x} .5h48v5h-48z`} fill="#f6f6f6" stroke="#fff" />
              <path d={`M${x + 14} 0h9v6h-9z`} fill="#f00" />
              <path d={`M${x + 24} 0h10v6h-10z`} fill="#008000" />
              <path d={`M${x + 1} 9h46M${x + 1} 13h46`} stroke="#008000" strokeWidth="2" strokeDasharray="6 2" />
            </g>
          ))}
        </svg>
      </div>
      <span className="pl-1">安信证券南方中心行</span>
      <svg className="mr-2 ml-auto h-[14px] w-[95px]" viewBox="0 0 95 14" aria-hidden="true">
        <rect x=".5" y="1.500" width="14" height="11" fill="#fff" stroke="#5a86c8" /><path d="M4 8.500h8M6 10.500h6" stroke="#c9b400" />
        <rect x="19.500" y=".5" width="13" height="12" fill="#fff" stroke="#999" /><path d="M20 2.500h13M22 5.500h9M22 7.500h9M22 9.500h9" stroke="#aaa" />
        <circle cx="44" cy="7" r="6" fill="#d8cc1c" stroke="#8c8410" /><path d="M44 10V4M41.500 6.500 44 4l2.500 2.500" fill="none" stroke="#5d5800" strokeWidth="1.500" />
        <path d="m59 1 8-1v7l-6 2zM59 12h6M62 8v4" fill="#888" stroke="#888" />
        <path d="M80 1l3 3h-6zM80 5l3 3h-6zM80 9l3 3h-6z" fill="#888" stroke="#888" />
        <path d="M92.500 2v6M92.500 10v2" stroke="#888" strokeWidth="2" />
      </svg>
    </footer>
  )
}

function Arrow({ rotate }) {
  return <path d="M1 8 7 2V5.500h8v5H7V14z" transform={`rotate(${rotate} 8 8)`} fill="#fff" stroke="#2f6fd0" />
}

const frame = <rect x=".5" y=".5" width="15" height="15" fill="#fff" stroke="#2f7be0" />

const TOOL_ICONS = [
  ['行情列表', <>{frame}<path d="M2 4h5M2 7h5M2 10h5" stroke="#0a9020" strokeWidth="1.500" /><path d="M9 4h5M9 7h5" stroke="#e22" strokeWidth="1.500" /><circle cx="11" cy="11" r="3" fill="#ddd" stroke="#777" /></>],
  ['报价', <>{frame}<path d="M2 3.500h3M2 6.500h3M2 9.500h3M2 12.500h3" stroke="#e22" /><path d="M6.500 3.500h3M6.500 6.500h3M6.500 9.500h3M6.500 12.500h3" stroke="#0a7020" /><path d="M11 3.500h3M11 6.500h3M11 9.500h3M11 12.500h3" stroke="#22c" /></>],
  ['走势', <>{frame}<path d="m2 12 3-4 2 2 3-3 1 1 3-4" fill="none" stroke="#e22" /></>],
  ['K线', <>{frame}<path d="M4 4v8M12 2v8" stroke="#d00" /><path d="M8 3v11" stroke="#080" /><path d="M3 6h2v4H3zM11 3h2v5h-2z" fill="#d00" /><path d="M7 5h2v7H7z" fill="#080" /></>],
  ['列表', <><rect x="4.500" y=".5" width="11" height="11" fill="#fff" stroke="#2f7be0" /><rect x=".5" y="3.500" width="12" height="11" fill="#fff" stroke="#2f7be0" /><path d="M3 7.500h7M3 9.500h7M3 11.500h7" stroke="#555" /></>],
  ['F10', <>{frame}<text x="8" y="11" textAnchor="middle" fontSize="8" fill="#0030c0">F10</text></>],
  ['板块', <>{frame}<path d="M6 6v7h4M6 9h4" fill="none" stroke="#777" /><path d="M3 2h5v4H3zM9 7h5v3H9zM9 11h5v3H9z" fill="#ffd04a" stroke="#c98c00" strokeWidth=".5" /></>],
  ['自选', <>{frame}<text x="8" y="12" textAnchor="middle" fontSize="11" fontWeight="bold" fill="#f06a1a">自</text></>],
  ['F12', <>{frame}<text x="8" y="11" textAnchor="middle" fontSize="8" fill="#0030c0">F12</text></>],
  ['公式', <><rect x=".5" y=".5" width="15" height="15" rx="3" fill="#fff" stroke="#0a7c90" /><text x="8" y="11" textAnchor="middle" fontSize="9" fontStyle="italic" fill="#0030c0">f(x)</text></>],
  ['圆', <>{frame}<path d="M6 4.500h4L12 7v2l-2 2.500H6L4 9V7z" fill="none" stroke="#2060c0" strokeWidth="1.500" /></>],
  ['sep1'],
  ['叠加', <>{frame}<path d="m2 7 3-3 2 2 3-2 2 2 2-3" fill="none" stroke="#e22" /><path d="m2 12 3-2 2 2 3-2 2 2 2-3" fill="none" stroke="#22c" /></>],
  ['RSI', <text x="8" y="11" textAnchor="middle" fontSize="9" fontWeight="bold" fill="#1a35c8">RSI</text>],
  ['金额', <><path d="m8 0 4 4H4z" fill="#b02020" /><path d="M5 14.500h8" stroke="#999" /><text x="8" y="12" textAnchor="middle" fontSize="12" fontWeight="bold" fill="#c02020">S</text></>],
  ['移动', <><path d="m8 0 3 4H5zM8 16l3-4H5zM0 8l4-3v6zM16 8l-4-3v6z" fill="#0a50b8" /><path d="M8 3v10M3 8h10" stroke="#0a50b8" /><circle cx="8" cy="8" r="2" fill="#fff" stroke="#0a50b8" /></>],
  ['画笔', <><path d="m2 14 1.500-4L11 2l3 3-8 7.500z" fill="#f0a030" stroke="#8a5a20" strokeWidth=".7" /><path d="m11 2 1.500-1.200 2.700 2.700L14 5z" fill="#d05050" /><path d="m2 14 .7-2 1.300 1.300z" fill="#222" /></>],
  ['sep2'],
  ['分时', <>{frame}<text x="8" y="12" textAnchor="middle" fontSize="10" fill="#0030c0">Fs</text></>],
  ['刷新', <>{frame}<path d="M4 8a4 4 0 0 1 7-2.500M12 8a4 4 0 0 1-7 2.500" fill="none" stroke="#3aa030" strokeWidth="2.500" /><path d="m9 6 4 1V3zM7 10l-4-1v4z" fill="#3aa030" /></>],
]

function RightToolbar() {
  return (
    <nav className="flex w-6 shrink-0 flex-col items-center overflow-hidden border-l border-[#d0d0d0] bg-[#f0f0f0] pr-px text-[#0a3a90]">
      <div className="flex flex-col pb-px">
        {[['返回', 0], ['上翻', 90], ['下翻', -90]].map(([label, rotate]) => (
          <button key={label} type="button" aria-label={label} className="flex h-[22px] items-center">
            <svg className="size-4" viewBox="0 0 16 16"><Arrow rotate={rotate} /></svg>
          </button>
        ))}
      </div>
      {TOOL_ICONS.map(([label, icon]) => (
        <Fragment key={label}>
          {icon ? (
            <button type="button" aria-label={label} className="flex h-[23px] items-center">
              <svg className="size-4" viewBox="0 0 16 16">{icon}</svg>
            </button>
          ) : (
            <hr className="my-[3px] w-5 border-t-2 border-[#aaa]" />
          )}
        </Fragment>
      ))}
      <div className="flex w-full flex-col">
        {['1', '5', '15', '30', '60', '日', '周', '月', 'N', '多', '季', '年'].map(p => (
          <button key={p} type="button" className={`h-[23px] ${p === '30' ? 'border-t border-l border-[#888] bg-[#f8f8f8]' : ''}`}>{p}</button>
        ))}
      </div>
    </nav>
  )
}

function TaskButton({ label, look, children }) {
  return (
    <button type="button" className={`mr-[3px] flex h-[38px] w-[159px] items-center gap-1 rounded-[3px] border pl-[10px] text-left ${look}`}>
      {children}
      <span className="truncate [text-shadow:0_1px_2px_#000]">{label}</span>
    </button>
  )
}

const GLASS = 'border-[#9cc0da] bg-linear-to-br from-[#7fb0cc] via-[#3f86b0] to-[#2f78a6]'

function Taskbar() {
  return (
    <div className="relative flex h-10 shrink-0 items-center overflow-hidden border-t border-[#0d2c48] bg-linear-to-r from-[#2a6a9c] via-[#1f6499] via-50% to-[#123c6c] font-['Open_Sans','Noto_Sans_CJK_SC',sans-serif] text-white">
      <svg className="absolute inset-0 h-full w-full" viewBox="0 0 1920 40" preserveAspectRatio="none" aria-hidden="true">
        <path d="M1300 0h20l44 40h-20z" fill="#8fb8dc" opacity=".4" />
        <path d="M40 0h10L10 40H0z" fill="#8fb8dc" opacity=".4" />
      </svg>
      <button type="button" aria-label="开始" className="relative ml-2">
        <svg className="size-[37px]" viewBox="0 0 37 37">
          <defs>
            <radialGradient id="orb" cx=".5" cy=".85" r=".9"><stop offset="0" stopColor="#5fd0f0" /><stop offset=".5" stopColor="#1d5c90" /><stop offset="1" stopColor="#a8c4d8" /></radialGradient>
          </defs>
          <circle cx="18.500" cy="18.500" r="17.500" fill="url(#orb)" stroke="#16395a" />
          <path d="M10 11q4-3 8.500-1l-1 7.500q-4-2-8.500 0z" fill="#f0622a" />
          <path d="M20 10.500q4 2 9 0l-1.500 7.500q-4 2-8.500 0z" fill="#8cc63e" />
          <path d="M8.500 19.500q4-2 8.500 0l-1.500 7.500q-4-2-8 0z" fill="#4aa8e8" />
          <path d="M18.500 20q4 2 8.500 0l-1.500 7q-4 2-8.500.5z" fill="#fcc82c" />
        </svg>
      </button>
      <div className="relative ml-[15px] flex items-center">
        <TaskButton label="安信安睿终端V7...." look="border-white bg-linear-to-br from-[#a8c8dc] via-[#6a9fc0] to-[#a9cadb]">
          <svg className="size-[30px]" viewBox="0 0 28 28" aria-hidden="true">
            <path d="M9 8V5l7-5h12v17l-6 6h-2V8z" fill="#fff" /><path d="M2 9h18v18H2z" fill="#fff" />
            <path d="m11 7 6-5h8l-4 5z" fill="#f7b733" /><path d="m22 8 4-5v13l-4 5z" fill="#e8951c" />
            <path d="M4 11h4v10h10v4H4z" fill="#1c3fa8" /><path d="M10 11h8v8h-8z" fill="#8fb0d0" />
          </svg>
        </TaskButton>
        <svg className="ml-[13px] size-8" viewBox="0 0 32 32" aria-label="Firefox">
          <circle cx="17" cy="14" r="12.500" fill="#1f56a8" /><ellipse cx="19" cy="8" rx="7" ry="5" fill="#6cc0e8" opacity=".8" />
          <path d="M3 4q2 3 5 3 3-2 6-1-3 2-2 4 3 0 4 2-3 2-4 4 1 5 6 5 4 0 6-4 2-5 0-10 5 5 5 11-1 13-14 13Q1 29 1 16q0-7 2-12z" fill="#e2661a" />
          <path d="M25 4q6 6 5.500 13Q29 30 16 30q11-2 12-12 1-8-3-14z" fill="#fcc83a" />
          <path d="M4 18q1 8 10 10-8-4-7-11z" fill="#f5a030" />
        </svg>
        <svg className="ml-[29px] size-8" viewBox="0 0 32 32" aria-label="百度网盘">
          <rect width="32" height="32" rx="6" fill="#fff" />
          <circle cx="10" cy="20" r="5" fill="none" stroke="#18a8e8" strokeWidth="3.500" /><circle cx="22" cy="20" r="5" fill="none" stroke="#2e7cf0" strokeWidth="3.500" />
          <circle cx="16" cy="11.500" r="4.500" fill="none" stroke="#2e8cf0" strokeWidth="3.500" /><path d="M12.500 15a4.500 4.500 0 0 0 7 0" fill="none" stroke="#f04458" strokeWidth="3.500" />
          <path d="M10 30h6v2h-6z" fill="#f04458" /><path d="M16 30h6v2h-6z" fill="#2e7cf0" />
        </svg>
        <div className="ml-[17px] flex">
          <TaskButton label="库\图片" look={GLASS}>
            <svg className="size-[30px]" viewBox="0 0 30 30" aria-hidden="true">
              <path d="m7 3 15 2 2 14-15-2z" fill="#e4f2fa" stroke="#456" /><path d="m9 5 11 2 1.500 10-11-2z" fill="#3a86c0" /><path d="m9.500 11 11 3 .5 3-10.500-2z" fill="#5aa050" />
              <path d="m9 18 15 2 4 4-9 4L1 24z" fill="#8cd0ee" stroke="#3a80a8" strokeWidth=".6" />
            </svg>
          </TaskButton>
          <TaskButton label="sharkeater 专栏 ..." look={GLASS}>
            <svg className="size-[30px]" viewBox="0 0 30 30" aria-hidden="true">
              <circle cx="15" cy="15" r="14.500" fill="#fbc924" /><path d="M2.500 7.500A14.500 14.500 0 0 1 28 8.500H15l-6 10z" fill="#dd4434" />
              <path d="M2.500 7.500A14.500 14.500 0 0 0 14 29.500l7-11-12 0z" fill="#1aa05c" /><circle cx="15" cy="15" r="6.500" fill="#fff" /><circle cx="15" cy="15" r="5.200" fill="#4285f4" />
            </svg>
          </TaskButton>
          <TaskButton label="微信" look="border-[#f8e8a0] bg-linear-to-b from-[#f0e070] via-[#dca040] to-[#d07430]">
            <svg className="size-8" viewBox="0 0 32 32" aria-hidden="true">
              <ellipse cx="12" cy="12" rx="12" ry="11" fill="#28c465" /><path d="m4 19-1 6 6-3z" fill="#28c465" /><circle cx="8" cy="8" r="1.500" fill="#145" /><circle cx="16" cy="8" r="1.500" fill="#145" />
              <ellipse cx="22" cy="20" rx="10" ry="9" fill="#e8e8e8" /><path d="m24 27 4 4 1-6z" fill="#e8e8e8" /><circle cx="18.500" cy="17" r="1.300" fill="#777" /><circle cx="25.500" cy="17" r="1.300" fill="#777" />
            </svg>
          </TaskButton>
          <TaskButton label="60分钟线A - 画图" look={GLASS}>
            <svg className="size-[30px]" viewBox="0 0 30 30" aria-hidden="true">
              <path d="M14 4q13 0 13 11 0 12-12 13-4 0-3-4 1-4-3-3-7 0-7-5Q3 5 14 4z" fill="#cfe4f2" stroke="#8ab" />
              <circle cx="7" cy="16" r="3" fill="#d83a2e" /><circle cx="11" cy="10" r="2.500" fill="#58b030" /><circle cx="18" cy="8" r="2.500" fill="#f0b020" /><circle cx="17" cy="20" r="2.500" fill="#4878d0" />
              <path d="M17 29q-1-9 6-22l3 1q-2 14-9 21z" fill="#e88a28" /><path d="M22 7q1-6 5-7 4 3 0 8z" fill="#a87a4a" />
            </svg>
          </TaskButton>
        </div>
      </div>
      <div className="relative ml-auto flex h-full items-center">
        <span className="font-['Liberation_Sans',sans-serif]">CH</span>
        <svg className="ml-1 h-4 w-[17px]" viewBox="0 0 17 16" aria-hidden="true"><path d="M3 4q3-3 6-1t6-2" fill="none" stroke="#ccc" /><rect x="1" y="6" width="15" height="8" rx="1" fill="#ddd" stroke="#666" /><path d="M3 8.500h11M3 10.500h11M5 12.500h7" stroke="#555" strokeDasharray="1 1" /></svg>
        <svg className="ml-[11px] size-[17px]" viewBox="0 0 17 17" aria-hidden="true"><rect x="1" y="1" width="15" height="14" fill="#38c838" /><circle cx="8" cy="7" r="5" fill="#fff" /><path d="M4 3l3 2M9 3l3 2M5 8h5" stroke="#111" strokeWidth="2" /><circle cx="12.500" cy="12" r="4.500" fill="#1a9a3a" stroke="#fff" strokeWidth=".8" /><path d="m10 12 2 2 3-4" fill="none" stroke="#fff" strokeWidth="1.500" /></svg>
        <svg className="ml-[31px] size-[17px]" viewBox="0 0 17 17" aria-hidden="true"><rect x="5" y="4" width="11" height="8" fill="#164678" stroke="#fff" strokeWidth="1.500" /><path d="M7 15.500h8M11 12v3M3.500 6v8H8M1 1v4h5V1M3.500 0v2" fill="none" stroke="#fff" strokeWidth="1.300" /></svg>
        <span className="ml-[6px] flex size-4 items-center justify-center rounded-full bg-[#f02828] text-[10px] leading-none font-bold italic">hp</span>
        <svg className="ml-2 size-4" viewBox="0 0 16 16" aria-hidden="true"><path d="M1 5h3l4-4v14l-4-4H1z" fill="#fff" /><circle cx="11" cy="11" r="3.800" fill="#fff" stroke="#e02020" strokeWidth="2" /><path d="m8.500 8.500 5 5" stroke="#e02020" strokeWidth="2" /></svg>
        <time className="ml-[22px] text-center leading-[18px]">16:28<br />2022/1/7</time>
        <button type="button" aria-label="显示桌面" className="ml-3 h-full w-[14px] border border-[#6f94b8] bg-linear-to-b from-[#4a6a8a] to-[#123a68]" />
      </div>
    </div>
  )
}

export default function App() {
  return (
    <div className="flex h-screen flex-col overflow-hidden bg-black font-['Liberation_Sans','Noto_Sans_CJK_SC',sans-serif] text-xs text-[#c0c0c0]">
      <Header />
      <div className="flex min-h-0 flex-1">
        <div className="flex min-w-0 flex-1 flex-col">
          <div className="flex min-h-0 flex-1">
            <div className="flex min-w-0 flex-1 flex-col">
              <div className="flex min-h-0 flex-1">
                <SideTabs />
                <main className="flex min-w-0 flex-1 flex-col">
                  <ChartToolbar />
                  <PricePane />
                  <RsiPane />
                  <TimeAxis />
                  <IndicatorTabs />
                </main>
              </div>
              <div className="flex h-[18px] shrink-0 border-b border-[#b00000]">
                <button type="button" className="w-11 border-r border-[#b00000]">扩展∧</button>
                <button type="button" className="w-14 border-r border-[#b00000]">关联报价</button>
                <button type="button" className="w-14 border-r border-[#b00000] text-[#c0c000]">市场资讯</button>
                <button type="button" className="w-14 border-r border-[#b00000] text-[#c0c000]">板块资讯</button>
              </div>
            </div>
            <QuotePanel />
          </div>
          <StatusBar />
        </div>
        <RightToolbar />
      </div>
      <Taskbar />
    </div>
  )
}
